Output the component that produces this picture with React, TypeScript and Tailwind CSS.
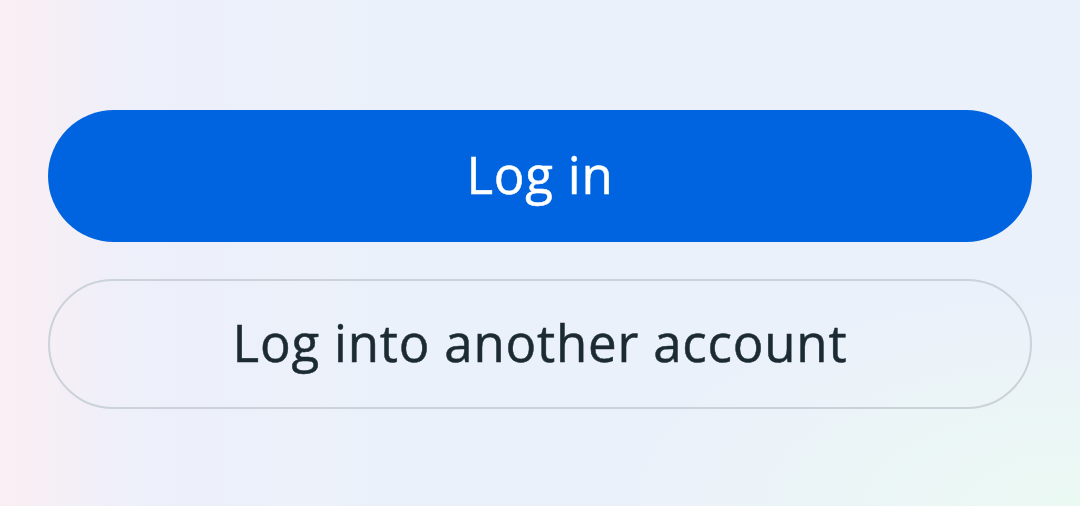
export default function App() {
  return (
    <div
      className="w-[1080px] h-[506px] overflow-hidden relative"
      style={{ fontFamily: "'Open Sans', 'Noto Sans', sans-serif" }}
    >
      <div className="absolute inset-0 bg-[#ebf1fa]" />
      <div className="absolute inset-0 bg-[linear-gradient(90deg,rgba(252,238,242,0.9)_0%,rgba(240,238,250,0.5)_12%,rgba(235,241,250,0)_35%)]" />
      <div className="absolute inset-0 bg-[radial-gradient(ellipse_at_100%_100%,rgba(235,250,242,0.9)_0%,rgba(235,245,248,0)_30%)]" />
      <div className="relative flex flex-col px-[48px] pt-[110px] gap-[37px]">
        <button className="h-[132px] w-full rounded-full bg-[#0064e0] text-white text-[51px] tracking-[0.8px] [-webkit-text-stroke:0.5px_currentColor] flex items-center justify-center pb-[3px]">
          Log in
        </button>
        <button className="h-[130px] w-full rounded-full border-[2px] border-[#cbd2d9] text-[#1c2b33] text-[51px] tracking-[0.8px] [-webkit-text-stroke:0.5px_currentColor] flex items-center justify-center pb-[3px]">
          Log into another account
        </button>
      </div>
    </div>
  );
}
